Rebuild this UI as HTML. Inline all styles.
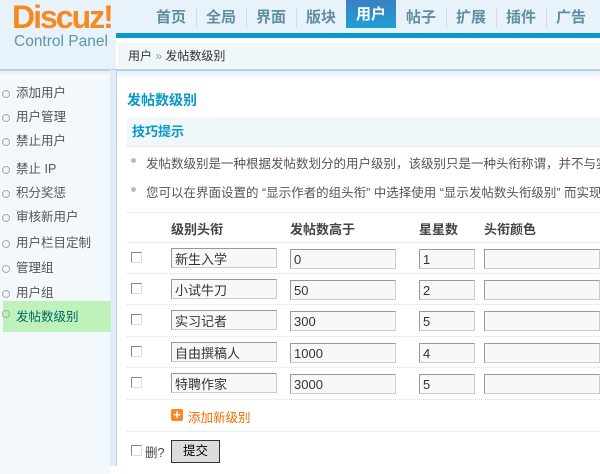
<!DOCTYPE html>
<html><head><meta charset="utf-8"><style>
*{margin:0;padding:0;box-sizing:border-box}
body{width:600px;height:466px;overflow:hidden;background:#fff;font-family:"Liberation Sans","Noto Sans CJK SC",sans-serif;font-size:12px;color:#333;position:relative}
.a{position:absolute}
#hdr{left:0;top:0;width:600px;height:70px;background:#e8f2fa}
.logo{left:12px;top:-1px;font:bold 32px/36px "Liberation Sans",sans-serif;color:#f7891f;letter-spacing:-2px}
.cp{left:14px;top:33px;font-size:15.5px;color:#5e96a8}
.nav{top:0;height:33px;font-size:15px;font-weight:bold;color:#5f8fa0;width:50px;text-align:center;line-height:35px}
.sep{top:8px;width:1px;height:20px;background:#d0dde6}
.on{background:linear-gradient(#3a80c0,#1ea0d6);color:#fff}
#side{left:0;top:70px;width:110px;height:396px;background:#f2f8fc}
.si{left:0;width:110px;height:25px;line-height:25px;padding-left:16px;font-size:12.5px;color:#555}
.si:before{content:"";position:absolute;left:2px;top:9px;width:6px;height:6px;border:1px solid #aaa;border-radius:50%}
.hl{background:#bff2bb;color:#066;left:3px;width:108px;padding-left:13px}
.hl:before{left:-1px}
input.t{position:absolute;height:20px;border:1px solid #999;border-right-color:#ccc;border-bottom-color:#ccc;background:#f7f9f8;font-size:13px;padding-left:3px;font-family:"Liberation Sans","Noto Sans CJK SC",sans-serif;color:#333}
.cb{position:absolute;width:11px;height:11px;border:1px solid #888;border-right-color:#ddd;border-bottom-color:#ddd;background:#fff}
.dl{position:absolute;left:127px;width:473px;border-top:1px dotted #cfe3ef}
.th{position:absolute;top:219px;font-weight:bold;font-size:13px;color:#444}
</style></head><body>
<div id="hdr" class="a"></div>
<div class="a logo">Discuz!</div>
<div class="a cp">Control Panel</div>
<div class="a nav" style="left:146px">首页</div><div class="a sep" style="left:196px"></div>
<div class="a nav" style="left:196px">全局</div><div class="a sep" style="left:246px"></div>
<div class="a nav" style="left:246px">界面</div><div class="a sep" style="left:296px"></div>
<div class="a nav" style="left:296px">版块</div>
<div class="a nav on" style="left:346px;height:28px;line-height:30px">用户</div>
<div class="a nav" style="left:396px">帖子</div><div class="a sep" style="left:446px"></div>
<div class="a nav" style="left:446px">扩展</div><div class="a sep" style="left:496px"></div>
<div class="a nav" style="left:496px">插件</div><div class="a sep" style="left:546px"></div>
<div class="a nav" style="left:546px">广告</div>
<div class="a" style="left:116px;top:33px;width:484px;height:5px;background:#0b98cb"></div>
<div class="a" style="left:116px;top:38px;width:484px;height:32px;background:#fff"></div>
<div class="a" style="left:118px;top:43px;width:482px;height:25px;background:#f0f7fb;line-height:26px;padding-left:10px;font-size:12px;color:#333">用户 <span style="color:#999">»</span> 发帖数级别</div>
<div class="a" style="left:0;top:69px;width:600px;height:2px;background:#b7d0e2"></div>
<div class="a" style="left:0;top:71px;width:600px;height:8px;background:linear-gradient(#e6f0f7,#fff)"></div>
<div id="side" class="a" style="top:78px"></div>
<div class="a" style="left:110px;top:70px;width:6px;height:396px;background:#deedf9"></div>
<div class="a" style="left:116px;top:70px;width:1px;height:396px;background:#b7cfe0"></div>
<div class="a si" style="top:81px">添加用户</div>
<div class="a si" style="top:105px">用户管理</div>
<div class="a si" style="top:129px">禁止用户</div>
<div class="a si" style="top:157px">禁止 IP</div>
<div class="a si" style="top:181px">积分奖惩</div>
<div class="a si" style="top:205px">审核新用户</div>
<div class="a si" style="top:231px">用户栏目定制</div>
<div class="a si" style="top:256px">管理组</div>
<div class="a si" style="top:281px">用户组</div>
<div class="a si hl" style="top:301px;height:31px;line-height:33px">发帖数级别</div>
<div class="a" style="left:127px;top:90px;font-size:14px;font-weight:bold;color:#0a97c9">发帖数级别</div>
<div class="a" style="left:127px;top:117px;width:473px;height:30px;background:#f0f7fb;border-bottom:1px dotted #cfe3ef;padding-left:5px;line-height:29px;font-weight:bold;font-size:13px;color:#0a97c9">技巧提示</div>
<div class="a" style="left:131px;top:158px;width:5px;height:5px;border-radius:50%;background:#bbb"></div>
<div class="a" style="left:146px;top:153px;white-space:nowrap;color:#555;font-size:12.5px">发帖数级别是一种根据发帖数划分的用户级别，该级别只是一种头衔称谓，并不与实际</div>
<div class="a" style="left:131px;top:187px;width:5px;height:5px;border-radius:50%;background:#bbb"></div>
<div class="a" style="left:146px;top:182px;white-space:nowrap;color:#555;font-size:12.5px">您可以在界面设置的 “显示作者的组头衔” 中选择使用 “显示发帖数头衔级别” 而实现</div>
<div class="dl" style="top:212px"></div>
<div class="th" style="left:171px">级别头衔</div>
<div class="th" style="left:290px">发帖数高于</div>
<div class="th" style="left:419px">星星数</div>
<div class="th" style="left:484px">头衔颜色</div>
<div class="dl" style="top:242px"></div>
<div class="dl" style="top:273px"></div>
<div class="dl" style="top:304px"></div>
<div class="dl" style="top:336px"></div>
<div class="dl" style="top:367px"></div>
<div class="dl" style="top:399px"></div>
<div class="dl" style="top:431px"></div>

<div class="cb" style="left:131px;top:252px"></div>
<input class="t" style="left:171px;top:248px;width:106px" value="新生入学">
<input class="t" style="left:290px;top:249px;width:106px" value="0">
<input class="t" style="left:419px;top:249px;width:56px" value="1">
<input class="t" style="left:484px;top:249px;width:116px" value="">

<div class="cb" style="left:131px;top:283px"></div>
<input class="t" style="left:171px;top:279px;width:106px" value="小试牛刀">
<input class="t" style="left:290px;top:280px;width:106px" value="50">
<input class="t" style="left:419px;top:280px;width:56px" value="2">
<input class="t" style="left:484px;top:280px;width:116px" value="">

<div class="cb" style="left:131px;top:314px"></div>
<input class="t" style="left:171px;top:310px;width:106px" value="实习记者">
<input class="t" style="left:290px;top:311px;width:106px" value="300">
<input class="t" style="left:419px;top:311px;width:56px" value="5">
<input class="t" style="left:484px;top:311px;width:116px" value="">

<div class="cb" style="left:131px;top:346px"></div>
<input class="t" style="left:171px;top:342px;width:106px" value="自由撰稿人">
<input class="t" style="left:290px;top:343px;width:106px" value="1000">
<input class="t" style="left:419px;top:343px;width:56px" value="4">
<input class="t" style="left:484px;top:343px;width:116px" value="">

<div class="cb" style="left:131px;top:377px"></div>
<input class="t" style="left:171px;top:373px;width:106px" value="特聘作家">
<input class="t" style="left:290px;top:374px;width:106px" value="3000">
<input class="t" style="left:419px;top:374px;width:56px" value="5">
<input class="t" style="left:484px;top:374px;width:116px" value="">

<div class="a" style="left:171px;top:409px;width:12px;height:12px;background:#f7891f;border-radius:2px;color:#fff;font:bold 13px/12px 'Liberation Sans';text-align:center">+</div>
<div class="a" style="left:188px;top:407px;color:#f06c00;font-size:12.5px">添加新级别</div>
<div class="cb" style="left:131px;top:445px"></div>
<div class="a" style="left:145px;top:442px;color:#444;font-size:12.5px">删?</div>
<div class="a" style="left:171px;top:440px;width:49px;height:23px;background:#ddd;border:1px solid #333;text-align:center;line-height:21px;font-size:12.5px;color:#000">提交</div>
</body></html>
